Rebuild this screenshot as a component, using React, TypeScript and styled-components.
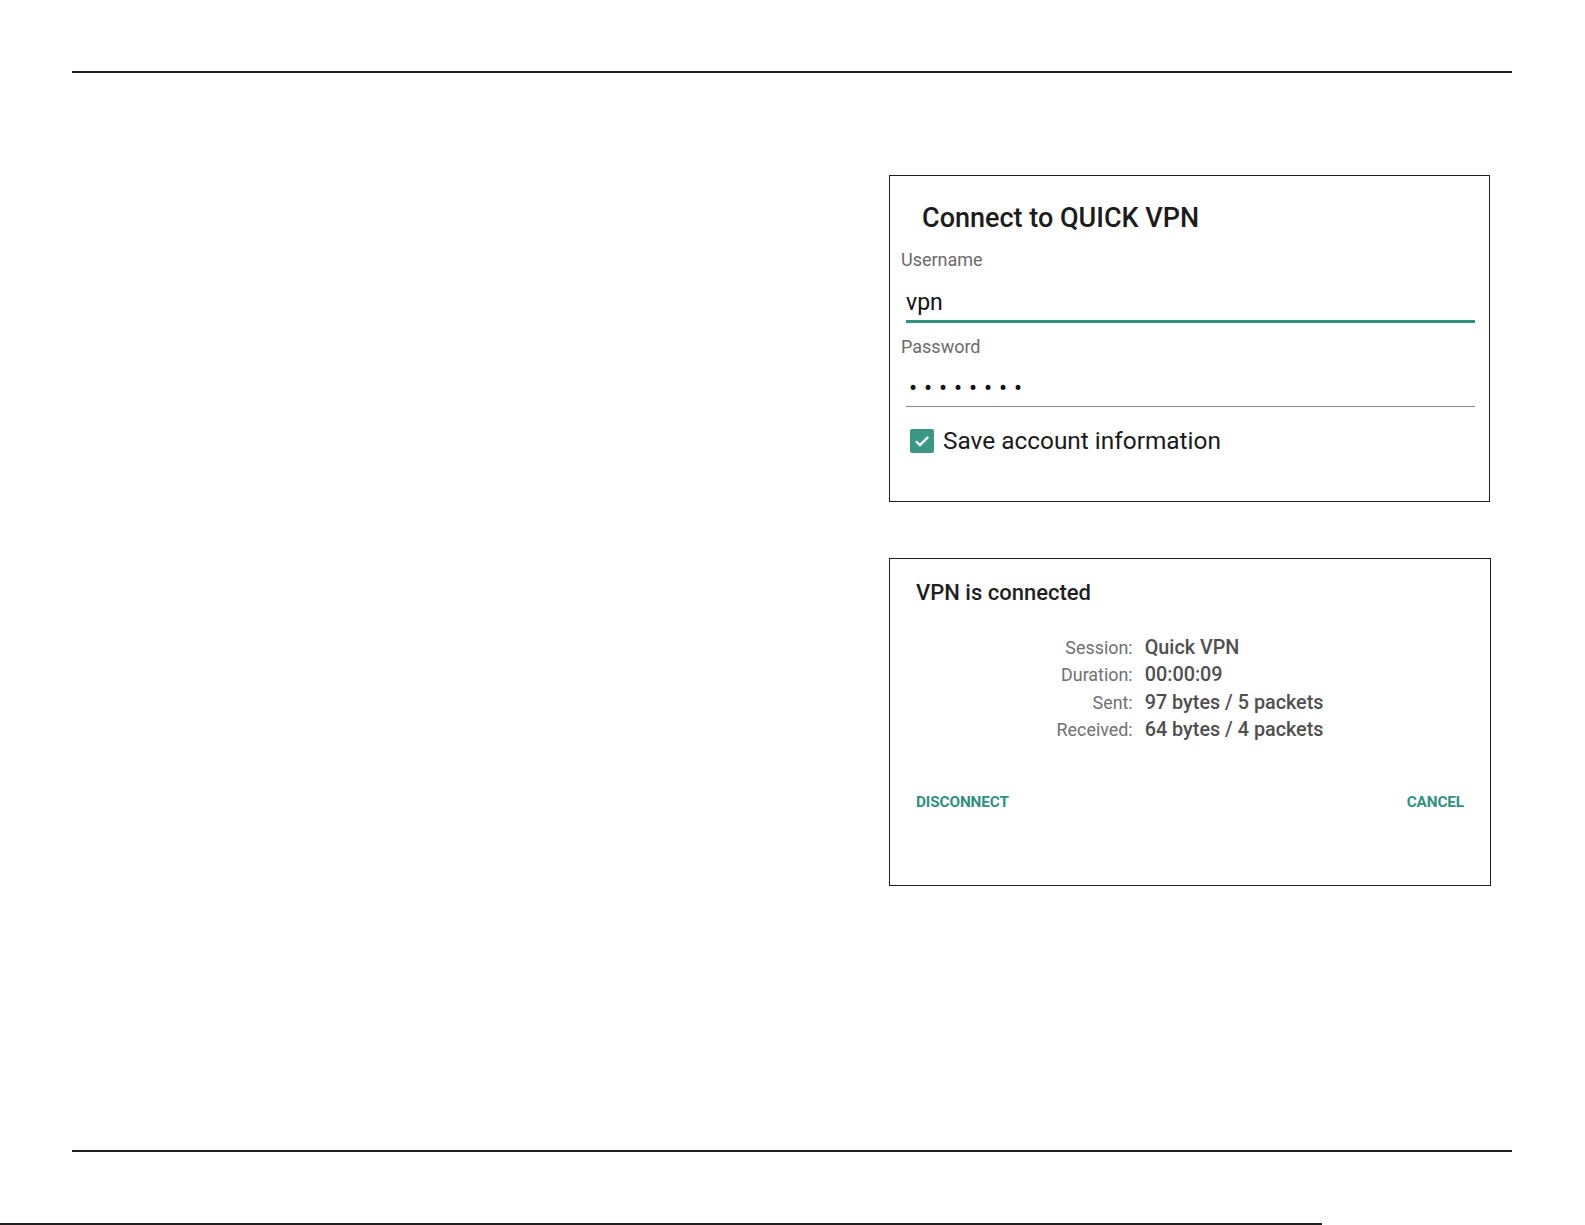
import React from 'react';
import styled, { createGlobalStyle } from 'styled-components';

const GlobalStyle = createGlobalStyle`
  html, body {
    margin: 0;
    padding: 0;
    background: #ffffff;
  }
  body {
    font-family: Roboto, "Liberation Sans", Arial, sans-serif;
  }
`;

const teal = '#2f9180';

function LoginDialog() {
  return (
    <Card>
      <LoginTitle>Connect to QUICK VPN</LoginTitle>
      <FieldLabel first>Username</FieldLabel>
      <InputLine active>vpn</InputLine>
      <FieldLabel>Password</FieldLabel>
      <InputLine dots>••••••••</InputLine>
      <CheckRow>
        <CheckBox>
          <svg width="18" height="18" viewBox="0 0 16 16">
            <path d="M2.6 8.2 L6.2 11.7 L13.5 4.3" fill="none" stroke="#fff" strokeWidth="2.1" />
          </svg>
        </CheckBox>
        <CheckText>Save account information</CheckText>
      </CheckRow>
    </Card>
  );
}

const stats = [
  ['Session:', 'Quick VPN'],
  ['Duration:', '00:00:09'],
  ['Sent:', '97 bytes / 5 packets'],
  ['Received:', '64 bytes / 4 packets'],
];

function StatusDialog() {
  return (
    <Card second>
      <StatusTitle>VPN is connected</StatusTitle>
      <StatsGrid>
        {stats.map(([k, v]) => (
          <React.Fragment key={k}>
            <StatKey>{k}</StatKey>
            <StatValue>{v}</StatValue>
          </React.Fragment>
        ))}
      </StatsGrid>
      <ButtonRow>
        <TextButton>DISCONNECT</TextButton>
        <TextButton>CANCEL</TextButton>
      </ButtonRow>
    </Card>
  );
}

export default function App() {
  return (
    <Page>
      <GlobalStyle />
      <Rule />
      <Content>
        <DialogColumn>
          <LoginDialog />
          <StatusDialog />
        </DialogColumn>
      </Content>
      <Rule bottom />
      <FootLine />
    </Page>
  );
}

const Page = styled.div`
  width: 1585px;
  height: 1225px;
  display: flex;
  flex-direction: column;
  overflow: hidden;
`;

const Rule = styled.div<{ bottom?: boolean }>`
  height: 2px;
  background: #231f20;
  margin: ${(p) => (p.bottom ? '0 73px 71px 72px' : '71px 73px 0 72px')};
  flex-shrink: 0;
`;

const FootLine = styled.div`
  height: 2px;
  width: 1322px;
  background: #231f20;
  flex-shrink: 0;
`;

const Content = styled.div`
  flex: 1;
  display: flex;
  justify-content: flex-end;
  padding: 102px 94px 0 0;
`;

const DialogColumn = styled.div`
  display: flex;
  flex-direction: column;
  align-items: flex-start;
  gap: 56px;
`;

const Card = styled.div<{ second?: boolean }>`
  box-sizing: border-box;
  width: ${(p) => (p.second ? '602px' : '601px')};
  height: ${(p) => (p.second ? '328px' : '327px')};
  border: 1px solid #1f1f1f;
  display: flex;
  flex-direction: column;
  padding: ${(p) => (p.second ? '21px 26px 0 26px' : '26px 14px 0 11px')};
  color: #212121;
`;

const LoginTitle = styled.div`
  font-size: 27px;
  line-height: 32px;
  font-weight: 500;
  margin-left: 21px;
  color: #1c1c1c;
`;

const FieldLabel = styled.div<{ first?: boolean }>`
  font-size: 18px;
  line-height: 22px;
  color: #6b6b6b;
  margin-top: ${(p) => (p.first ? '15px' : '13px')};
`;

const InputLine = styled.div<{ active?: boolean; dots?: boolean }>`
  margin: ${(p) => (p.dots ? '12px' : '12px')} 0 0 5px;
  height: ${(p) => (p.dots ? '36px' : '37px')};
  line-height: ${(p) => (p.dots ? '37px' : '40px')};
  font-size: ${(p) => (p.dots ? '24px' : '23px')};
  letter-spacing: ${(p) => (p.dots ? '6.9px' : 'normal')};
  padding-left: ${(p) => (p.dots ? '3px' : '0')};
  color: #111;
  border-bottom: ${(p) => (p.active ? `3px solid ${teal}` : '1.5px solid #8a8a8a')};
  overflow: hidden;
`;

const CheckRow = styled.div`
  display: flex;
  align-items: center;
  gap: 9px;
  margin: 20px 0 0 9px;
`;

const CheckBox = styled.div`
  width: 24px;
  height: 24px;
  border-radius: 2px;
  background: #3a9784;
  display: flex;
  align-items: center;
  justify-content: center;
`;

const CheckText = styled.span`
  font-size: 24.4px;
  line-height: 28px;
  color: #1a1a1a;
`;

const StatusTitle = styled.div`
  font-size: 22px;
  line-height: 26px;
  font-weight: 500;
  color: #1f1f1f;
`;

const StatsGrid = styled.div`
  display: grid;
  grid-template-columns: auto auto;
  justify-content: center;
  column-gap: 12px;
  margin-top: 28px;
`;

const StatKey = styled.div`
  text-align: right;
  font-size: 17.9px;
  line-height: 27.3px;
  color: #707070;
`;

const StatValue = styled.div`
  font-size: 19.8px;
  line-height: 27.3px;
  font-weight: 500;
  color: #4f4f4f;
`;

const ButtonRow = styled.div`
  display: flex;
  justify-content: space-between;
  margin-top: 49px;
`;

const TextButton = styled.span`
  font-size: 15.3px;
  line-height: 20px;
  font-weight: 700;
  color: ${teal};
  letter-spacing: -0.1px;
`;
